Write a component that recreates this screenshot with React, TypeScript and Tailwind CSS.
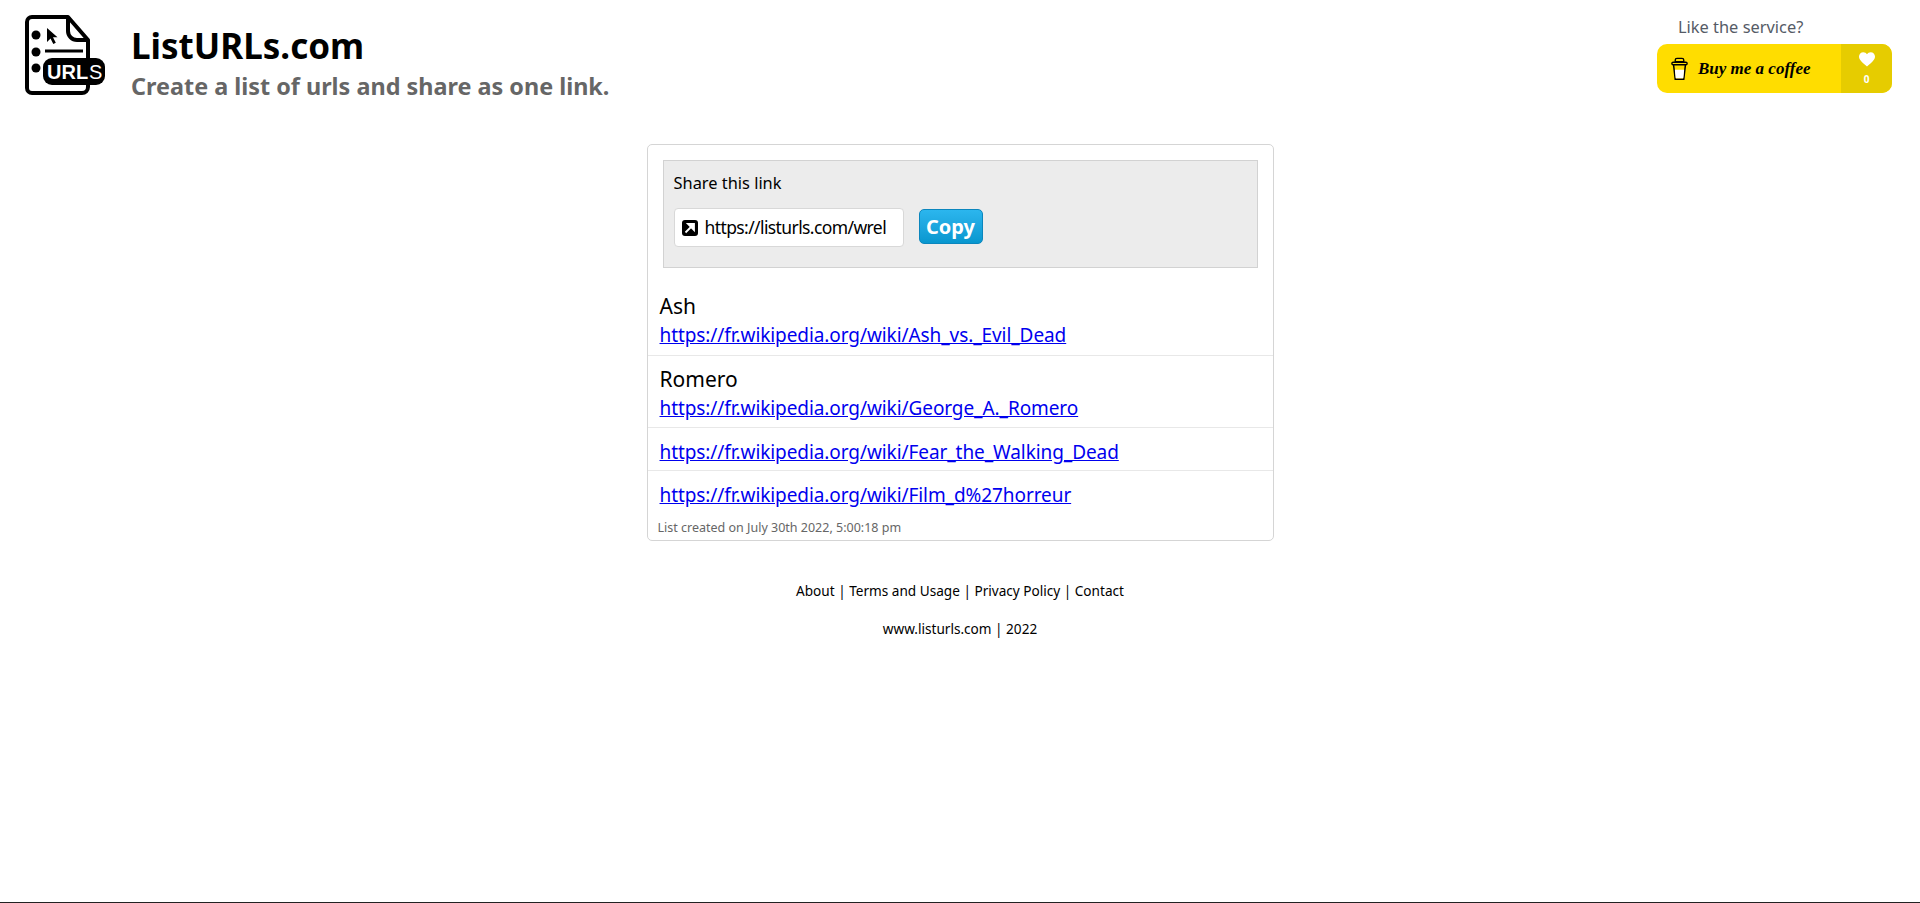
const FONT = 'font-["Noto_Sans",sans-serif]';

const ITEMS = [
  { title: 'Ash', url: 'https://fr.wikipedia.org/wiki/Ash_vs._Evil_Dead', pad: 'pt-[7px] pb-[7px]' },
  { title: 'Romero', url: 'https://fr.wikipedia.org/wiki/George_A._Romero', pad: 'pt-[8px] pb-[6px]' },
  { title: '', url: 'https://fr.wikipedia.org/wiki/Fear_the_Walking_Dead', pad: 'pt-[11px] pb-[5px]' },
  { title: '', url: 'https://fr.wikipedia.org/wiki/Film_d%27horreur', pad: 'pt-[11px] pb-[9px]' },
];

function Logo() {
  return (
    <svg width="82" height="82" viewBox="0 0 82 82" className="shrink-0">
      <path
        d="M3 8a5 5 0 0 1 5-5h36l20 23v47a6 6 0 0 1-6 6H8a5 5 0 0 1-5-5z"
        fill="#fff"
        stroke="#000"
        strokeWidth="4"
        strokeLinejoin="round"
      />
      <path d="M44 3v14a9 9 0 0 0 9 9h11" fill="none" stroke="#000" strokeWidth="4" />
      <circle cx="12" cy="21" r="4.500" fill="#000" />
      <circle cx="12" cy="38" r="4.500" fill="#000" />
      <circle cx="12" cy="54" r="4.500" fill="#000" />
      <path d="M23 14v14l3.500-3.500 2.800 5.500 2.500-1.200-2.800-5.500h4.500z" fill="#000" />
      <rect x="21" y="35.500" width="38" height="3" fill="#000" />
      <rect x="19" y="44" width="62" height="27" rx="9" fill="#000" />
      <text x="23" y="65" fontFamily="Liberation Sans, sans-serif" fontSize="20" fontWeight="700" fill="#fff">
        URL
      </text>
      <text x="65" y="65" fontFamily="Liberation Sans, sans-serif" fontSize="20" fill="#fff">
        S
      </text>
    </svg>
  );
}

function ShortcutIcon() {
  return (
    <svg width="16" height="16" viewBox="0 0 16 16" className="shrink-0">
      <rect width="16" height="16" rx="3" fill="#000" />
      <path d="M3.500 12.500L10 6M6 4h6v6z" fill="#fff" stroke="#fff" strokeWidth="1.800" />
    </svg>
  );
}

function CupIcon() {
  return (
    <svg width="17" height="24" viewBox="0 0 20 28" className="shrink-0">
      <path d="M3 9l2 17h10l2-17" fill="none" stroke="#000" strokeWidth="1.800" />
      <path d="M4.500 15h11l-1 10h-9z" fill="#fff" />
      <rect x="1" y="6" width="18" height="3" rx="1.500" fill="none" stroke="#000" strokeWidth="1.600" />
      <path d="M5 5.500V3.500c0-1 1-2 2-2h6c1 0 2 1 2 2v2z" fill="none" stroke="#000" strokeWidth="1.600" />
    </svg>
  );
}

function HeartIcon() {
  return (
    <svg width="16" height="15" viewBox="0 0 24 22">
      <path
        d="M12 21.500C5 15.500 0 11.500 0 6.500 0 3 2.800 0 6.500 0 8.800 0 10.800 1.200 12 3c1.200-1.800 3.200-3 5.500-3C21.200 0 24 3 24 6.500c0 5-5 9-12 15z"
        fill="#fff"
      />
    </svg>
  );
}

export default function App() {
  return (
    <div className={`${FONT} min-h-[903px] bg-white flex flex-col border-b border-[#222]`}>
      {/* Header */}
      <header className="flex justify-between pl-[24px] pr-[28px] pt-[14px] h-[144px]">
        <div className="flex items-start gap-[25px]">
          <Logo />
          <div className="pt-[9px]">
            <h1 className="text-[35px] leading-[46px] font-bold text-black">ListURLs.com</h1>
            <p className="text-[23.400px] leading-[34px] font-bold text-[#666]">
              Create a list of urls and share as one link.
            </p>
          </div>
        </div>
        <div className="w-[235px] -mt-[1px]">
          <p className="pl-[21px] text-[16.400px] leading-[28px] text-[#555b66]">Like the service?</p>
          <div className="mt-[3px] flex h-[49px] rounded-[10px] overflow-hidden bg-[#ffdd00]">
            <div className="flex-1 flex items-center gap-[10px] pl-[14px]">
              <CupIcon />
              <span className='font-["Liberation_Serif",serif] italic font-bold text-[17px] text-black'>
                Buy me a coffee
              </span>
            </div>
            <div className="w-[51px] bg-[#e6cc00] flex flex-col items-center pt-[8px]">
              <HeartIcon />
              <span className="text-[10px] leading-[16px] mt-[4px] font-bold text-white">0</span>
            </div>
          </div>
        </div>
      </header>

      {/* Card */}
      <main className="mx-auto w-[627px] rounded-[5px] border border-[#d5d5d5] pt-[15px] pb-[1px]">
        <div className="mx-[15px] h-[108px] bg-[#ececec] border border-[#d2d2d2] px-[10px] pt-[9px]">
          <p className="text-[16.400px] leading-[26px] text-black">Share this link</p>
          <div className="mt-[12px] flex items-start gap-[15px]">
            <div className="w-[230px] h-[39px] rounded-[4px] bg-white border border-[#d8d8d8] flex items-center gap-[7px] pl-[7px] pr-[15px]">
              <ShortcutIcon />
              <input
                readOnly
                value="https://listurls.com/wrel"
                className="min-w-0 flex-1 bg-transparent outline-none text-[17.500px] tracking-[-0.600px] text-black"
              />
            </div>
            <button className="mt-[1px] w-[64px] h-[35px] rounded-[5px] border border-[#0b86bd] bg-gradient-to-b from-[#2bb6ee] to-[#0797cf] text-white text-[20px] font-bold flex items-center justify-center">
              Copy
            </button>
          </div>
        </div>

        <div className="mt-[16px]">
          {ITEMS.map((item, i) => (
            <div key={item.url} className={`px-[12px] ${i > 0 ? 'border-t border-[#e8e8e8]' : ''} ${item.pad}`}>
              {item.title && <div className="text-[21px] leading-[31px] text-black">{item.title}</div>}
              <a href="#" className="block text-[19px] tracking-[-0.080px] leading-[26px] text-[#0000ee] underline">
                {item.url}
              </a>
            </div>
          ))}
        </div>
        <p className="px-[10px] text-[12.500px] leading-[22px] text-[#666]">List created on July 30th 2022, 5:00:18 pm</p>
      </main>

      {/* Footer */}
      <footer className="mt-[38px] text-center text-[13.600px] leading-[24px] text-black">
        <p>About | Terms and Usage | Privacy Policy | Contact</p>
        <p className="mt-[14px]">www.listurls.com | 2022</p>
      </footer>
    </div>
  );
}
